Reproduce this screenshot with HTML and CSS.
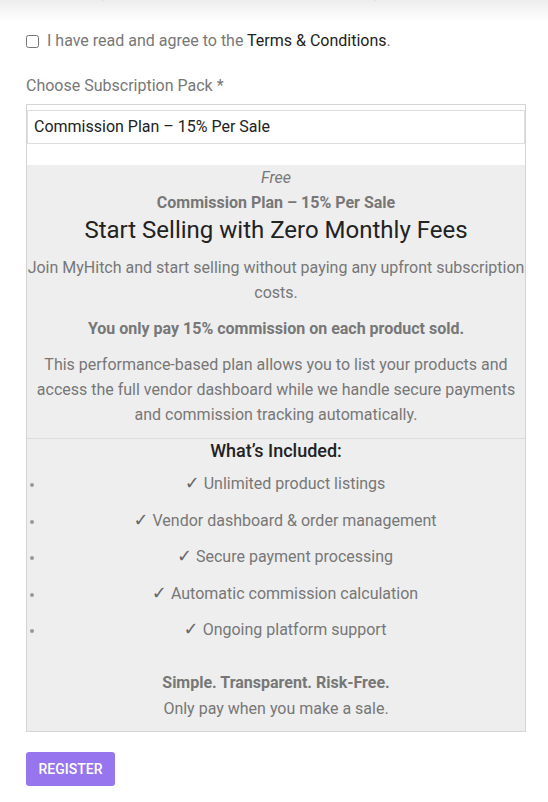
FILE: index.html
```html
<!DOCTYPE html>
<html lang="en">
<head>
<meta charset="utf-8">
<title>Register</title>
<link rel="stylesheet" href="styles.css">
</head>
<body>
<div class="top-shadow"></div>
<form class="form">
  <p class="cut-line">Shop URL: (e.g., myhitch.com/shop/your-shop-name)</p>
  <label class="agree">
    <input type="checkbox" class="agree-box">
    <span>I have read and agree to the <a class="terms">Terms &amp; Conditions</a>.</span>
  </label>
  <div class="field-label">Choose Subscription Pack *</div>
  <div class="pack">
    <div class="select">Commission Plan – 15% Per Sale</div>
    <div class="pack-info">
      <div class="price">Free</div>
      <div class="plan-name">Commission Plan – 15% Per Sale</div>
      <h2 class="headline">Start Selling with Zero Monthly Fees</h2>
      <p class="txt">Join MyHitch and start selling without paying any upfront subscription costs.</p>
      <p class="txt strong">You only pay 15% commission on each product sold.</p>
      <p class="txt">This performance-based plan allows you to list your products and access the full vendor dashboard while we handle secure payments and commission tracking automatically.</p>
      <hr class="divider">
      <h3 class="included">What’s Included:</h3>
      <ul class="features">
        <li><span class="check">✓</span> Unlimited product listings</li>
        <li><span class="check">✓</span> Vendor dashboard &amp; order management</li>
        <li><span class="check">✓</span> Secure payment processing</li>
        <li><span class="check">✓</span> Automatic commission calculation</li>
        <li><span class="check">✓</span> Ongoing platform support</li>
      </ul>
      <p class="txt strong closing">Simple. Transparent. Risk-Free.</p>
      <p class="txt">Only pay when you make a sale.</p>
    </div>
  </div>
  <button type="button" class="register">REGISTER</button>
</form>
</body>
</html>
```

FILE: styles.css
```css
html, body {
  margin: 0;
  padding: 0;
  background: #fff;
}
body {
  font-family: Roboto, "Liberation Sans", Arial, sans-serif;
  font-size: 16px;
  color: #777;
  overflow: hidden;
}
.top-shadow {
  position: fixed;
  left: 0;
  right: 0;
  top: 0;
  height: 22px;
  background: linear-gradient(rgba(0,0,0,0.07), rgba(0,0,0,0));
  pointer-events: none;
}
.form {
  display: flow-root;
  padding: 0 22px 0 26px;
}
.cut-line {
  margin: -20px 0 0 0;
  line-height: 24px;
  color: #777;
  font-size: 15px;
}
.agree {
  display: flex;
  align-items: center;
  margin-top: 25px;
  height: 24px;
  line-height: 24px;
  color: #777;
}
.agree-box {
  width: 13px;
  height: 13px;
  margin: 0 8px 0 0;
}
.terms {
  color: #222;
}
.field-label {
  margin-top: 21px;
  line-height: 24px;
  color: #777;
  margin-bottom: 6px;
}
.pack {
  width: 498px;
  border: 1px solid #d4d4d4;
}
.select {
  margin-top: 5px;
  height: 32px;
  line-height: 32px;
  border: 1px solid #ddd;
  padding-left: 6px;
  color: #222;
  font-size: 16px;
}
.pack-info {
  margin-top: 21px;
  background: #eee;
  text-align: center;
  padding-bottom: 10px;
}
.price {
  font-style: italic;
  font-size: 16px;
  line-height: 25px;
}
.plan-name {
  font-weight: 700;
  font-size: 16px;
  line-height: 26px;
}
.headline {
  margin: 0;
  font-size: 24px;
  font-weight: 400;
  color: #222;
  line-height: 28px;
}
.txt {
  margin: 11px 0 0 0;
  line-height: 25px;
  font-size: 16px;
}
.strong {
  font-weight: 700;
  font-size: 16px;
}
.divider {
  margin: 11px 0 0 0;
  border: 0;
  border-top: 1px solid #ddd;
  height: 0;
}
.included {
  margin: 0;
  font-size: 18px;
  font-weight: 500;
  color: #222;
  line-height: 23px;
}
.features {
  margin: 9px 0 0 0;
  padding: 0 0 0 18px;
  list-style: disc;
}
.features li {
  line-height: 25px;
  margin-bottom: 11.5px;
}
.features li::marker {
  color: #999;
  font-size: 13px;
}
.check {
  font-family: "DejaVu Sans", sans-serif;
  font-size: 18px;
  line-height: 0;
  color: #666;
}
.closing {
  margin-top: 28px;
}
.closing + .txt {
  margin-top: 1px;
}
.register {
  margin-top: 20px;
  width: 89px;
  height: 34px;
  background: #9775ee;
  color: #fff;
  border: 0;
  border-radius: 3px;
  font-family: Roboto, "Liberation Sans", Arial, sans-serif;
  font-size: 14px;
  font-weight: 500;
  padding: 0;
}
```
